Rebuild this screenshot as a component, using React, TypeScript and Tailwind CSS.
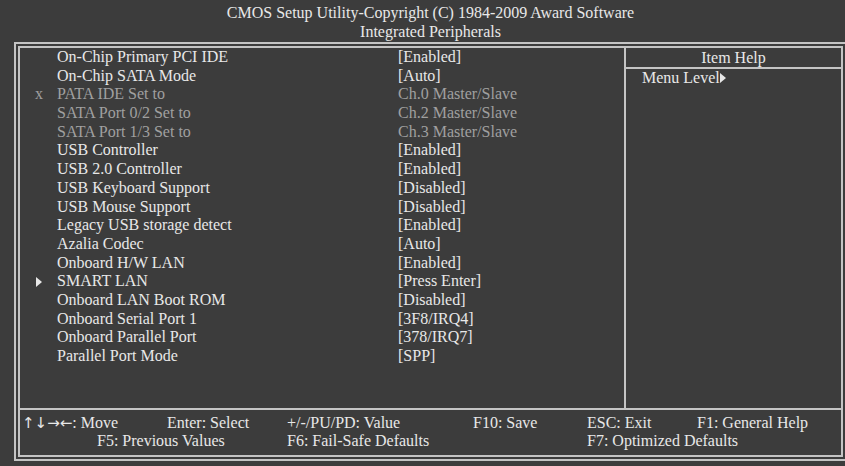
import React from 'react';

type Row = {
  label: string;
  value: string;
  mark?: 'x' | 'sub';
  dim?: boolean;
};

const rows: Row[] = [
  { label: 'On-Chip Primary PCI IDE', value: '[Enabled]' },
  { label: 'On-Chip SATA Mode', value: '[Auto]' },
  { label: 'PATA IDE Set to', value: 'Ch.0 Master/Slave', mark: 'x', dim: true },
  { label: 'SATA Port 0/2 Set to', value: 'Ch.2 Master/Slave', dim: true },
  { label: 'SATA Port 1/3 Set to', value: 'Ch.3 Master/Slave', dim: true },
  { label: 'USB Controller', value: '[Enabled]' },
  { label: 'USB 2.0 Controller', value: '[Enabled]' },
  { label: 'USB Keyboard Support', value: '[Disabled]' },
  { label: 'USB Mouse Support', value: '[Disabled]' },
  { label: 'Legacy USB storage detect', value: '[Enabled]' },
  { label: 'Azalia Codec', value: '[Auto]' },
  { label: 'Onboard H/W LAN', value: '[Enabled]' },
  { label: 'SMART LAN', value: '[Press Enter]', mark: 'sub' },
  { label: 'Onboard LAN Boot ROM', value: '[Disabled]' },
  { label: 'Onboard Serial Port 1', value: '[3F8/IRQ4]' },
  { label: 'Onboard Parallel Port', value: '[378/IRQ7]' },
  { label: 'Parallel Port Mode', value: '[SPP]' },
];

function Tri({ className }: { className?: string }) {
  return (
    <svg width="6" height="10" viewBox="0 0 6 10" className={className}>
      <path d="M0 0 L6 5 L0 10 Z" fill="#e8e8e8" />
    </svg>
  );
}

export default function App() {
  return (
    <div className="w-[845px] h-[466px] overflow-hidden bg-[#3c3c3c] text-[#e8e8e8] font-['Liberation_Serif','Times_New_Roman',serif] text-[16px]">
      {/* title */}
      <div className="ml-[14px] w-[833px] pt-[3px] text-center leading-[19px]">
        <div>CMOS Setup Utility-Copyright (C) 1984-2009 Award Software</div>
        <div>Integrated Peripherals</div>
      </div>

      {/* double frame */}
      <div className="ml-[14px] mt-[1px] w-[833px] h-[419px] border-2 border-[#c4c4c4] p-[2px]">
        <div className="h-full border-2 border-[#c4c4c4] flex flex-col">
          <div className="flex flex-1">
            <div className="w-[606px] border-r-2 border-[#c4c4c4]">
              {rows.map((r) => (
                <div key={r.label} className={`flex leading-[18.7px] h-[18.7px] ${r.dim ? 'text-[#a0a0a0]' : ''}`}>
                  <div className="w-[37px] flex items-center pl-[15px]">
                    {r.mark === 'x' && <span>x</span>}
                    {r.mark === 'sub' && <Tri className="ml-[1px]" />}
                  </div>
                  <div className="w-[341px] whitespace-nowrap">{r.label}</div>
                  <div className="whitespace-nowrap">{r.value}</div>
                </div>
              ))}
            </div>
            <div className="flex-1 flex flex-col">
              <div className="text-center leading-[19px] h-[21px] border-b-2 border-[#c4c4c4]">Item Help</div>
              <div className="pl-[16px] flex items-center leading-[17px]">
                Menu Level
                <Tri />
              </div>
            </div>
          </div>

          <div className="h-[47px] border-t-2 border-[#c4c4c4] pt-[4px] leading-[18px] whitespace-nowrap">
            <div className="flex">
              <span className="w-[147px] pl-[2px]">
                <span className="font-['DejaVu_Sans'] text-[15px]">↑↓→←</span>: Move
              </span>
              <span className="w-[120px]">Enter: Select</span>
              <span className="w-[186px]">+/-/PU/PD: Value</span>
              <span className="w-[114px]">F10: Save</span>
              <span className="w-[110px]">ESC: Exit</span>
              <span>F1: General Help</span>
            </div>
            <div className="flex">
              <span className="w-[267px] pl-[77px]">F5: Previous Values</span>
              <span className="w-[300px]">F6: Fail-Safe Defaults</span>
              <span>F7: Optimized Defaults</span>
            </div>
          </div>
        </div>
      </div>
    </div>
  );
}
